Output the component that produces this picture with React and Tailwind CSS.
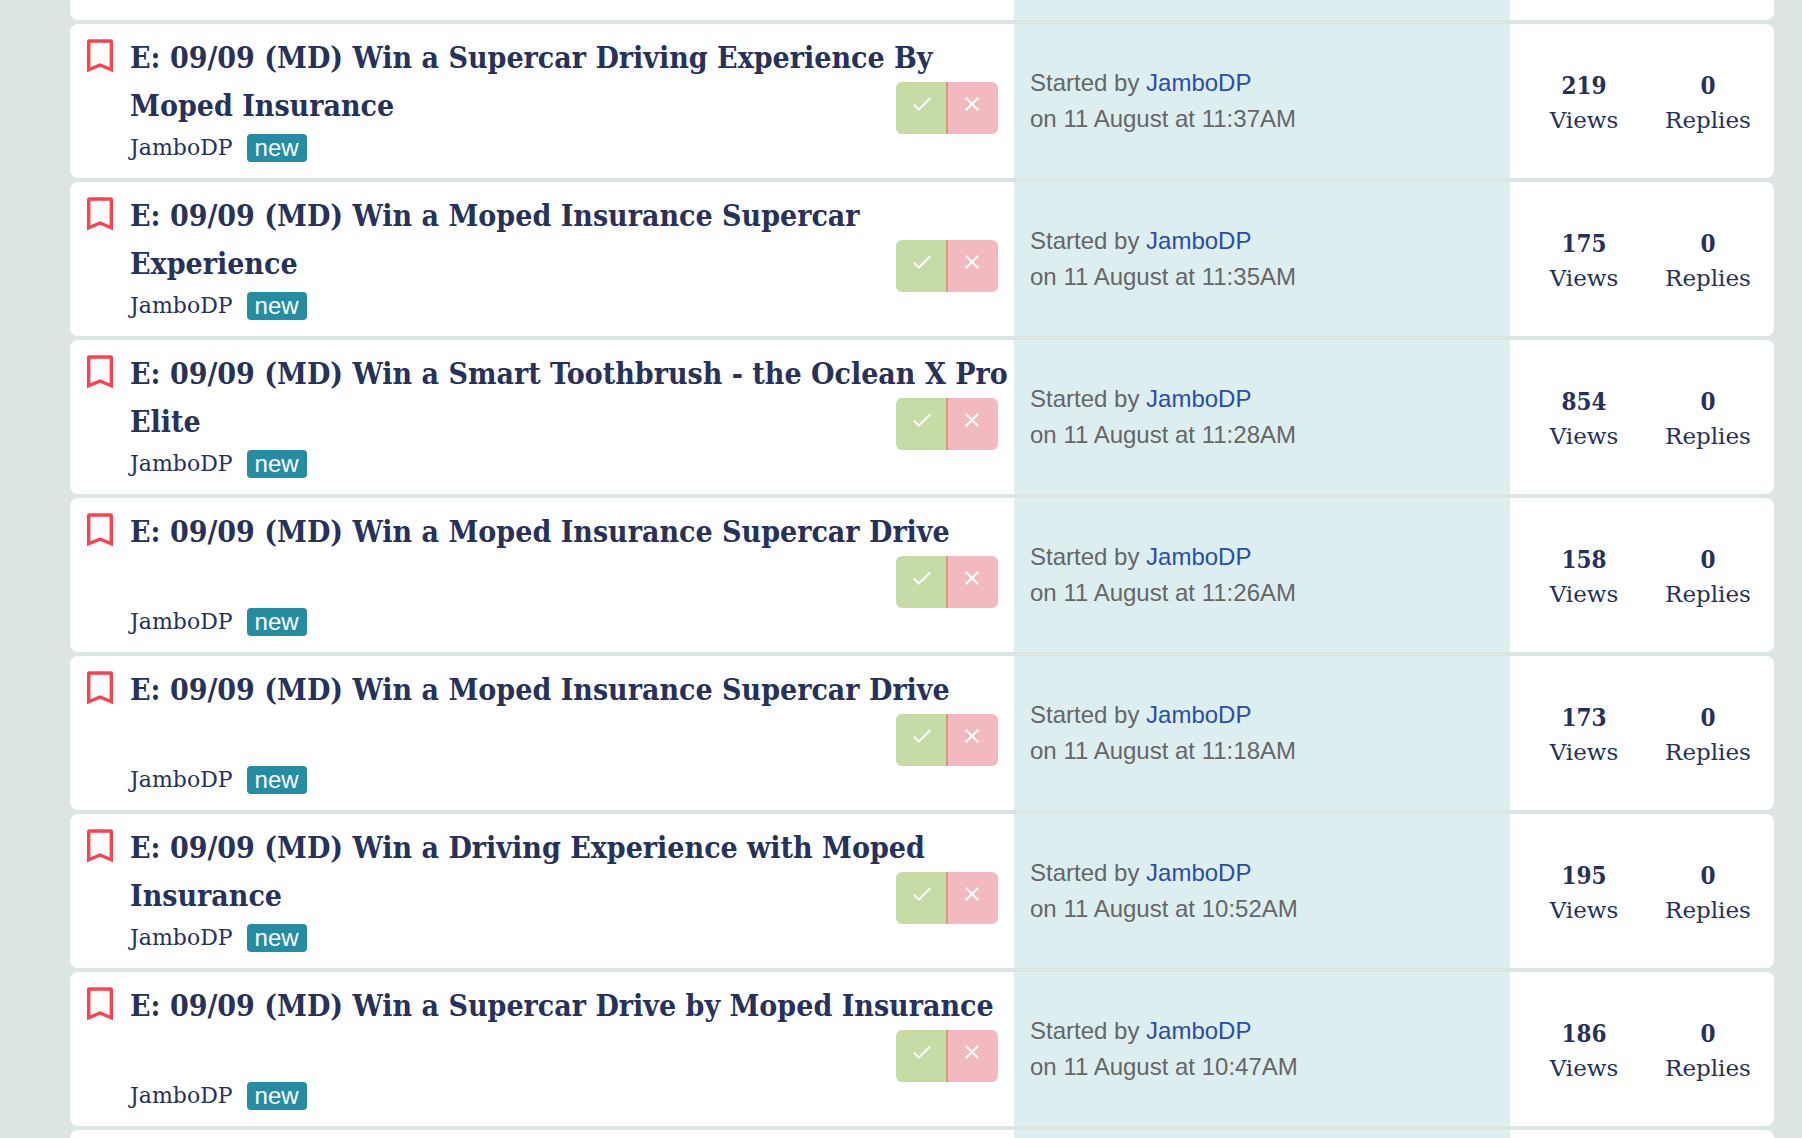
import { useState } from "react";

const topics = [
  {
    id: 1,
    title: "E: 09/09 (MD) Win a Supercar Driving Experience By Moped Insurance",
    author: "JamboDP",
    date: "11 August at 11:37AM",
    views: 219,
    replies: 0,
  },
  {
    id: 2,
    title: "E: 09/09 (MD) Win a Moped Insurance Supercar Experience",
    author: "JamboDP",
    date: "11 August at 11:35AM",
    views: 175,
    replies: 0,
  },
  {
    id: 3,
    title: "E: 09/09 (MD) Win a Smart Toothbrush - the Oclean X Pro Elite",
    author: "JamboDP",
    date: "11 August at 11:28AM",
    views: 854,
    replies: 0,
  },
  {
    id: 4,
    title: "E: 09/09 (MD) Win a Moped Insurance Supercar Drive",
    author: "JamboDP",
    date: "11 August at 11:26AM",
    views: 158,
    replies: 0,
  },
  {
    id: 5,
    title: "E: 09/09 (MD) Win a Moped Insurance Supercar Drive",
    author: "JamboDP",
    date: "11 August at 11:18AM",
    views: 173,
    replies: 0,
  },
  {
    id: 6,
    title: "E: 09/09 (MD) Win a Driving Experience with Moped Insurance",
    author: "JamboDP",
    date: "11 August at 10:52AM",
    views: 195,
    replies: 0,
  },
  {
    id: 7,
    title: "E: 09/09 (MD) Win a Supercar Drive by Moped Insurance",
    author: "JamboDP",
    date: "11 August at 10:47AM",
    views: 186,
    replies: 0,
  },
];

function BookmarkIcon({ filled }) {
  return (
    <svg width="28" height="35" viewBox="0 0 28 35" fill="#ff404f">
      <path
        fillRule={filled ? "nonzero" : "evenodd"}
        d="M1 3.5a2.2 2.2 0 0 1 2.2-2.2h21.6a2.2 2.2 0 0 1 2.2 2.2v30.7l-13-5.4-13 5.4zM4.4 4.8h19.2v24.4L14 25.2l-9.6 4z"
      />
    </svg>
  );
}

function VoteButtons() {
  return (
    <div className="flex h-13 overflow-hidden rounded-md">
      <button
        type="button"
        aria-label="Entered"
        className="flex w-13 justify-center border-r-2 border-[#d19c7c] bg-[#c7dba7] pt-3"
      >
        <svg width="20" height="20" viewBox="0 0 20 20" fill="none">
          <path d="M3 10.6l4.8 5L19.2 4.2" stroke="#fff" strokeWidth="2" />
        </svg>
      </button>
      <button
        type="button"
        aria-label="Not interested"
        className="flex w-[50px] justify-center bg-[#f3b9c0] pt-3"
      >
        <svg width="20" height="20" viewBox="0 0 20 20" fill="none">
          <path d="M2.7 3.7l12.6 12.6M15.3 3.7L2.7 16.3" stroke="#fff" strokeWidth="2" />
        </svg>
      </button>
    </div>
  );
}

function Stat({ value, label }) {
  return (
    <div className="w-31 pt-1 text-center">
      <p className="font-['DejaVu_Serif_Condensed','DejaVu_Serif',serif] text-2xl leading-[34px] font-bold">
        {value}
      </p>
      <p className="font-['DejaVu_Serif',serif] text-[23px] leading-[34px]">{label}</p>
    </div>
  );
}

function TopicRow({ item: { title, author, date, views, replies } }) {
  const [saved, setSaved] = useState(false);
  return (
    <li className="flex overflow-hidden rounded-lg bg-white">
      <div className="flex min-w-0 flex-1 gap-4 pt-2.5 pb-4 pl-4">
        <button
          type="button"
          aria-label="Bookmark"
          aria-pressed={saved}
          onClick={() => setSaved(!saved)}
          className="mt-1 shrink-0 self-start"
        >
          <BookmarkIcon filled={saved} />
        </button>
        {/* the vote buttons share the cell with the title and sit over its second line */}
        <div className="grid flex-1">
          <div className="col-start-1 row-start-1">
            <h2 className="min-h-24 font-['DejaVu_Serif_Condensed','DejaVu_Serif',serif] text-3xl leading-12 font-bold">
              <a href="#">{title}</a>
            </h2>
            <div className="mt-1 flex h-7 items-center gap-3.5">
              <span className="font-['DejaVu_Serif',serif] text-[22px] leading-7">{author}</span>
              <span className="rounded-sm bg-[#268ca2] px-2 text-2xl leading-7 text-white">
                new
              </span>
            </div>
          </div>
          <div className="col-start-1 row-start-1 mr-4 mb-7 self-end justify-self-end">
            <VoteButtons />
          </div>
        </div>
      </div>
      <div className="flex w-[496px] shrink-0 items-center bg-[#ddeef0] px-4 text-2xl leading-9 text-[#666]">
        <p>
          Started by{" "}
          <a href="#" className="text-[#2a4da8]">
            {author}
          </a>
          <br />
          on {date}
        </p>
      </div>
      <div className="flex w-[264px] shrink-0 items-center pr-1 pl-3">
        <Stat value={views} label="Views" />
        <Stat value={replies} label="Replies" />
      </div>
    </li>
  );
}

export default function App() {
  return (
    <main className="h-screen overflow-hidden bg-[#dde5e3] pr-7 pl-[70px] font-['Liberation_Sans',Arial,sans-serif] text-[#273159]">
      <ul className="flex flex-col gap-1">
        {/* tail of the row above */}
        <li className="flex h-5 overflow-hidden rounded-b-lg bg-white">
          <div className="flex-1" />
          <div className="w-[496px] bg-[#ddeef0]" />
          <div className="w-[264px]" />
        </li>
        {topics.map((item) => (
          <TopicRow key={item.id} item={item} />
        ))}
        {/* head of the row below */}
        <li className="flex h-5 overflow-hidden rounded-t-lg bg-white">
          <div className="flex-1" />
          <div className="w-[496px] bg-[#ddeef0]" />
          <div className="w-[264px]" />
        </li>
      </ul>
    </main>
  );
}
